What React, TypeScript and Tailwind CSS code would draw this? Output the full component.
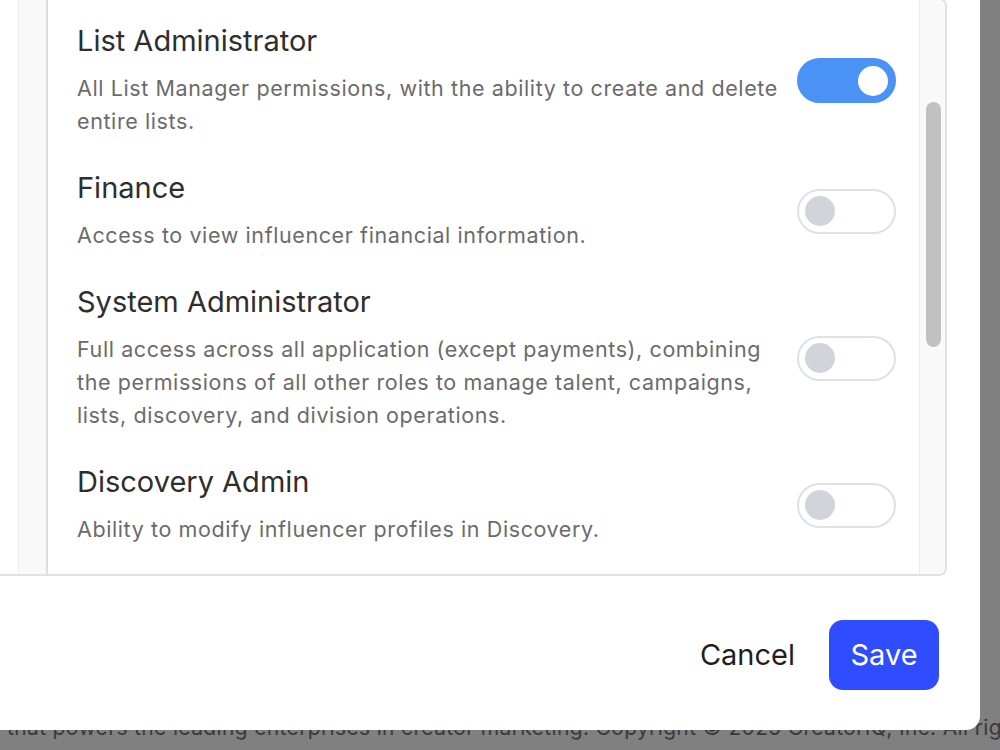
import React, { useState } from "react";

type Role = {
  name: string;
  description: string;
  enabled: boolean;
};

const roles: Role[] = [
  {
    name: "List Administrator",
    description:
      "All List Manager permissions, with the ability to create and delete entire lists.",
    enabled: true,
  },
  {
    name: "Finance",
    description: "Access to view influencer financial information.",
    enabled: false,
  },
  {
    name: "System Administrator",
    description:
      "Full access across all application (except payments), combining the permissions of all other roles to manage talent, campaigns, lists, discovery, and division operations.",
    enabled: false,
  },
  {
    name: "Discovery Admin",
    description: "Ability to modify influencer profiles in Discovery.",
    enabled: false,
  },
];

const Toggle: React.FC<{ checked: boolean; onChange: () => void }> = ({
  checked,
  onChange,
}) => (
  <button
    onClick={onChange}
    className={`flex-none w-[99px] h-[45px] rounded-full flex items-center px-[6px] border-2 ${
      checked
        ? "bg-[#4a93f5] border-[#4a93f5] justify-end"
        : "bg-white border-[#dfe1e6] justify-start"
    }`}
  >
    <span
      className={`block w-[30px] h-[30px] rounded-full ${
        checked ? "bg-white" : "bg-[#d1d5db]"
      }`}
    />
  </button>
);

export default function App() {
  const [state, setState] = useState(roles.map((r) => r.enabled));

  return (
    <div
      className="relative w-[1000px] h-[750px] overflow-hidden bg-[#808080] flex flex-col justify-end pb-[8px]"
      style={{ fontFamily: "Inter, 'Noto Sans', sans-serif" }}
    >
      {/* page footer behind the overlay */}
      <p className="whitespace-nowrap pl-[7px] text-[21px] leading-[28px] tracking-[0.35px] text-[#3a3a3a]">
        that powers the leading enterprises in creator marketing. Copyright © 2025 CreatorIQ, Inc. All rights reserved.
      </p>

      {/* modal */}
      <div className="absolute left-[-60px] top-[-20px] w-[1040px] h-[750px] bg-white rounded-[14px] flex flex-col">
        <div className="flex-1 min-h-0 mt-[18px] ml-[33px] mr-[33px] border-2 border-[#e0e0e8] rounded-[8px] flex overflow-hidden">
          {/* left pane + its scrollbar track */}
          <div className="flex-none w-[43px]" />
          <div className="flex-none w-[30px] bg-[#f9f9fa] border-l border-[#ededf1] border-r-2 border-r-[#dcdce6]" />

          {/* roles */}
          <div className="flex-1 pl-[29px] pr-[23px] pt-[23px] flex flex-col gap-[32px]">
            {roles.map((role, i) => (
              <div key={role.name} className="flex items-center gap-[12px]">
                <div className="flex-1">
                  <h3 className="text-[29px] leading-[36px] text-[#2e2e2e]">
                    {role.name}
                  </h3>
                  <p className="mt-[13px] text-[21.5px] leading-[33px] tracking-[0.6px] text-[#6b6b6b]">
                    {role.description}
                  </p>
                </div>
                <Toggle
                  checked={state[i]}
                  onChange={() =>
                    setState((s) => s.map((v, j) => (j === i ? !v : v)))
                  }
                />
              </div>
            ))}
          </div>

          {/* scrollbar */}
          <div className="flex-none w-[26px] bg-[#f9f9f9] border-l border-[#ececef]">
            <div className="ml-[6px] mt-[102px] w-[15px] h-[245px] rounded-full bg-[#c1c1c1]" />
          </div>
        </div>

        {/* footer */}
        <div className="flex-none flex items-center justify-end gap-[34px] pt-[44px] pb-[40px] pr-[41px]">
          <button className="text-[29px] text-[#1f1f1f]">Cancel</button>
          <button className="w-[110px] h-[70px] rounded-[14px] bg-[#2f4cff] text-white text-[29px]">
            Save
          </button>
        </div>
      </div>
    </div>
  );
}
